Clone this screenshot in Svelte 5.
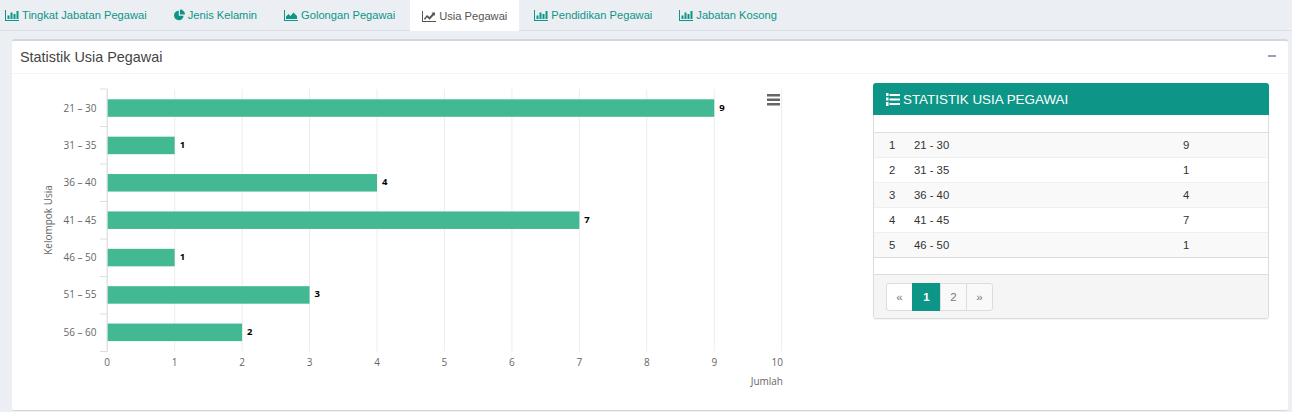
<script>
	const tabs = [
		{ label: 'Tingkat Jabatan Pegawai', icon: 'bar' },
		{ label: 'Jenis Kelamin', icon: 'pie' },
		{ label: 'Golongan Pegawai', icon: 'area' },
		{ label: 'Usia Pegawai', icon: 'line', active: true },
		{ label: 'Pendidikan Pegawai', icon: 'bar' },
		{ label: 'Jabatan Kosong', icon: 'bar' }
	];

	const series = [
		['21 - 30', 9],
		['31 - 35', 1],
		['36 - 40', 4],
		['41 - 45', 7],
		['46 - 50', 1],
		['51 - 55', 3],
		['56 - 60', 2]
	];

	// chart geometry, same numbers as the plot area of the chart
	const left = 107.2;
	const top = 89;
	const unit = 67.45;
	const step = 37.5;
	const barStep = 37.38;
	const bottom = top + step * 7;
	const xTicks = [0, 1, 2, 3, 4, 5, 6, 7, 8, 9, 10];
</script>

<div class="page">
	<ul class="tabs">
		{#each tabs as tab}
			<li class="tab" class:active={tab.active}>
				{#if tab.icon === 'pie'}
					<svg class="tab-icon" viewBox="0 0 11 12" width="11" height="12" aria-hidden="true">
						<path d="M4.800 1.700a4.800 4.800 0 1 0 4.800 5H4.800z" />
						<path d="M6 .500a5 5 0 0 1 5 5H6z" />
					</svg>
				{:else}
					<svg class="tab-icon" viewBox="0 0 14 12" width="14" height="12" aria-hidden="true">
						{#if tab.icon === 'bar'}
							<path d="M0 1h1v10h13v1H0z" />
							<path d="M2.500 6.500h2v3.500h-2zM5.500 3.500h2v6.500h-2zM8.500 5h2v5h-2zM11.500 2h2v8h-2z" />
						{:else if tab.icon === 'area'}
							<path d="M0 1h1v10h13v1H0z" />
							<path d="M2 10V7.500l2.500-2.500 2 2L9.500 3.500 13 7v3z" />
						{:else}
							<path d="M0 1h1v10h13v1H0z" />
							<path d="M2 8.500l3-3.500 2.500 2 3-3.500-1-1h3.500v3.500l-1-1-4.400 4.800L5 7.300 3 10z" />
						{/if}
					</svg>
				{/if}
				<span>{tab.label}</span>
			</li>
		{/each}
	</ul>

	<section class="box">
		<header class="box-header">
			<h3>Statistik Usia Pegawai</h3>
			<span class="collapse"></span>
		</header>

		<div class="box-body">
			<svg class="chart" viewBox="12 74 850 336" width="850" height="336">
				{#each xTicks as t}
					<line class="grid" x1={left + t * unit} x2={left + t * unit} y1={top} y2={bottom} />
					{#if t === 10}
						<text class="axis-label" x="783" y="366" text-anchor="end">{t}</text>
					{:else}
						<text class="axis-label" x={left + t * unit} y="366" text-anchor="middle">{t}</text>
					{/if}
				{/each}
				{#each series as _, i}
					<line class="axis" x1={left - 7} x2={left} y1={top + i * step} y2={top + i * step} />
				{/each}
				<line class="axis" x1={left - 7} x2={left} y1={bottom} y2={bottom} />
				<line class="axis" x1={left} x2={left} y1={top} y2={bottom} />

				{#each series as [label, value], i}
					<rect class="bar" x={left + 0.5} y={99.3 + i * barStep} width={value * unit - 0.5} height="17.500" />
					<text class="axis-label" x="96.500" y={111.500 + i * barStep} text-anchor="end">{label.replace('-', '–')}</text>
					<text class="value" x={left + value * unit + 5} y={110.500 + i * barStep}>{value}</text>
				{/each}

				<text class="axis-title" transform="translate(52 220) rotate(-90)" text-anchor="middle">Kelompok Usia</text>
				<text class="axis-title" x="783" y="385" text-anchor="end">Jumlah</text>

				<path class="menu" d="M767 94h13v2.500h-13zM767 98.500h13v2.500h-13zM767 103h13v2.500h-13z" />
			</svg>

			<div class="panel">
				<div class="panel-heading">
					<svg viewBox="0 0 14 13" width="14" height="13" aria-hidden="true">
						<path d="M0 0h2.500v3H0zM0 4.500h2.500v3H0zM0 9h2.500v4H0z" />
						<path d="M3.500 1h10.500v2H3.500zM3.500 5.500h10.500v2H3.500zM3.500 10h10.500v2H3.500z" />
					</svg>
					<span>STATISTIK USIA PEGAWAI</span>
				</div>
				<table>
					<thead><tr><th colspan="3"></th></tr></thead>
					<tbody>
						{#each series.slice(0, 5) as [label, value], i}
							<tr>
								<td class="no">{i + 1}</td>
								<td class="name">{label}</td>
								<td>{value}</td>
							</tr>
						{/each}
					</tbody>
				</table>
				<div class="panel-gap"></div>
				<div class="panel-footer">
					<ul class="pagination">
						<li>«</li>
						<li class="current">1</li>
						<li class="soft">2</li>
						<li class="soft">»</li>
					</ul>
				</div>
			</div>
		</div>
	</section>
</div>

<style>
	:global(body) {
		background: #ebeef3;
	}

	.page {
		height: 412px;
		overflow: hidden;
		font-family: 'Liberation Sans', Arial, sans-serif;
		color: #333;
	}

	/* Tabs */
	.tabs {
		display: flex;
		list-style: none;
		margin: 0;
		padding: 0;
		height: 30px;
		border-bottom: 1px solid #dcdfe5;
	}

	.tab {
		display: flex;
		align-items: center;
		gap: 3px;
		height: 30px;
		padding: 0 12px;
		margin-right: 3px;
		font-size: 11.150px;
		color: #0d9688;
	}

	.tab:first-child {
		padding-left: 5px;
	}

	.tab-icon {
		fill: currentColor;
		flex-shrink: 0;
	}

	.tab.active {
		background: #fff;
		color: #555;
		height: 31px;
	}

	/* Box */
	.box {
		margin: 8px 4px 0 12px;
		height: 369px;
		background: #fff;
		border-top: 2px solid #d2d6de;
		border-bottom: 1px solid #d2d6de;
		border-radius: 3px;
	}

	.box-header {
		display: flex;
		align-items: center;
		justify-content: space-between;
		height: 32px;
		padding: 0 12px 0 8px;
		border-bottom: 1px solid #f4f4f4;
	}

	h3 {
		margin: 0;
		font-size: 14.400px;
		font-weight: 400;
		color: #444;
	}

	.collapse {
		width: 8px;
		height: 2px;
		margin-bottom: 2px;
		background: #97a0b3;
	}

	.box-body {
		display: flex;
		align-items: flex-start;
	}

	.chart {
		display: block;
		flex-shrink: 0;
		font-family: 'Open Sans', sans-serif;
	}

	.grid {
		stroke: #ededed;
		stroke-width: 1;
	}

	.axis {
		stroke: #d8dce4;
		stroke-width: 1;
	}

	.bar {
		fill: #42b993;
	}

	.axis-label {
		font-size: 10px;
		fill: #666;
	}

	.axis-title {
		font-size: 10px;
		fill: #666;
	}

	.value {
		font-size: 9.500px;
		font-weight: 700;
		fill: #000;
	}

	.menu {
		fill: #666;
	}

	/* Panel */
	.panel {
		width: 396px;
		margin: 9px 0 0 11px;
		box-sizing: border-box;
		background: #fff;
		border: 1px solid #ddd;
		border-radius: 3px;
		box-shadow: 0 1px 1px rgba(0, 0, 0, 0.05);
	}

	.panel-heading {
		display: flex;
		align-items: center;
		gap: 3px;
		height: 32px;
		margin: -1px -1px 0;
		padding: 0 13px;
		background: #0d9688;
		color: #fff;
		font-size: 13.400px;
		border-radius: 3px 3px 0 0;
	}

	.panel-heading svg {
		fill: #fff;
	}

	table {
		width: 100%;
		border-collapse: collapse;
		font-size: 11.300px;
	}

	thead th {
		height: 17px;
		padding: 0;
		border-bottom: 1px solid #ddd;
	}

	tbody td {
		height: 25px;
		padding: 0;
		box-sizing: border-box;
		border-top: 1px solid #f0f0f0;
	}

	tbody tr:nth-child(odd) {
		background: #f9f9f9;
	}

	tbody tr:last-child td {
		border-bottom: 1px solid #ddd;
	}

	.no {
		width: 40px;
		padding-left: 15px;
		box-sizing: border-box;
	}

	.name {
		width: 269px;
	}

	.panel-gap {
		height: 16px;
		border-bottom: 1px solid #ddd;
	}

	.panel-footer {
		padding: 8px 12px 7px;
		background: #f5f5f5;
		border-radius: 0 0 3px 3px;
	}

	.pagination {
		display: flex;
		list-style: none;
		margin: 0;
		padding: 0;
		width: max-content;
		height: 28px;
		font-size: 11.500px;
		color: #777;
	}

	.pagination li {
		display: flex;
		align-items: center;
		justify-content: center;
		width: 27px;
		box-sizing: border-box;
		background: #fff;
		border: 1px solid #ddd;
		margin-left: -1px;
	}

	.pagination li:first-child {
		margin-left: 0;
		border-radius: 3px 0 0 3px;
	}

	.pagination li:last-child {
		border-radius: 0 3px 3px 0;
	}

	.pagination .soft {
		background: #f9f9f9;
	}

	.pagination .current {
		background: #0d9688;
		border-color: #0d9688;
		color: #fff;
		font-weight: 700;
		width: 29px;
	}
</style>
